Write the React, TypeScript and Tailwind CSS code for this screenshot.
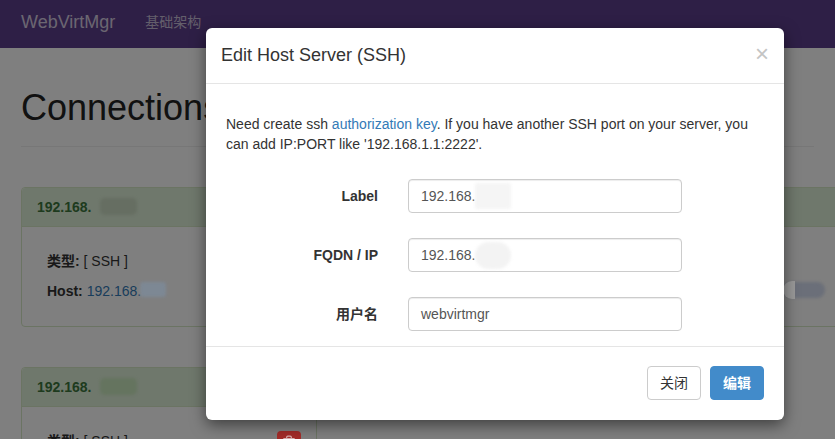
import { Trash2 } from "lucide-react";

const cjk = "font-['Liberation_Sans','Noto_Sans_CJK_SC',sans-serif]";

function Smudge({ className }: { className: string }) {
  return <span aria-hidden className={"absolute z-20 rounded-full blur-[1.5px] " + className} />;
}

function Panel({ narrow, children, smudge }: { narrow?: boolean; children: React.ReactNode; smudge: string }) {
  return (
    <section className={"rounded border border-[#d6e9c6] bg-white " + (narrow ? "w-[296px]" : "w-[840px]")}>
      <div className="relative h-[39px] rounded-t bg-[#dff0d8] border-b border-[#d6e9c6] px-[15px] pt-[9px] text-[14px] leading-[20px] font-bold text-[#3c763d]">
        192.168.
        <Smudge className={"left-[78px] top-[10px] h-[17px] w-[37px] !rounded-[5px] " + smudge} />
      </div>
      {children}
    </section>
  );
}

function Field({ label, value, smudge }: { label: string; value: string; smudge?: string }) {
  return (
    <div className="flex items-center">
      <label className="w-[152px] text-right text-[14px] font-bold text-[#333]">{label}</label>
      <div className="relative ml-[30px] flex h-[34px] w-[274px] items-center rounded border border-[#ccc] px-3 text-[14px] text-[#555] shadow-[inset_0_1px_1px_rgba(0,0,0,0.075)]">
        {value}
        {smudge && <span aria-hidden className={"absolute blur-[1.5px] " + smudge} />}
      </div>
    </div>
  );
}

export default function App() {
  return (
    <div className={"relative h-[439px] w-[835px] overflow-hidden bg-white text-[14px] text-[#333] " + cjk}>
      <nav className="flex h-12 items-center bg-[#5d3f8c] pb-[4px]">
        <span className="ml-[21px] text-[18px] text-[#d6cde2]">WebVirtMgr</span>
        <span className="ml-[30px] text-[14px] text-[#c6bcd6]">基础架构</span>
      </nav>
      <main className="px-[21px]">
        <h1 className="mt-[40px] border-b border-[#eee] pb-[18px] text-[36px] leading-[40px] text-[#222]">Connections</h1>
        <div className="mt-[40px] flex flex-col gap-[40px]">
          <Panel smudge="bg-[#666e62]">
            <div className="relative h-[99px] px-[25px] pt-[24px] leading-[20px]">
              <p><b>类型:</b> [ SSH ]</p>
              <p className="mt-[10px]">
                <b>Host:</b> <span className="text-[#337ab7]">192.168.</span>
              </p>
              <Smudge className="left-[118px] top-[55px] h-[15px] w-[26px] !rounded-[3px] bg-[#7d8894]" />
              <Smudge className="left-[761px] top-[55px] h-[16px] w-[42px] bg-[#6b6f79]" />
              <span aria-hidden className="absolute left-[761px] top-[54px] z-20 h-[18px] w-[12px] rounded-l-full bg-[#999999]" />
            </div>
          </Panel>
          <Panel narrow smudge="bg-[#65745f]">
            <div className="relative h-[60px] px-[25px] pt-[24px] leading-[20px]">
              <p><b>类型:</b> [ SSH ]</p>
              <span className="absolute left-[255px] top-[24px] z-20 flex h-[30px] w-[24px] justify-center rounded bg-[#a32c29] pt-[4px] text-[#d8b0b0]">
                <Trash2 size={14} />
              </span>
            </div>
          </Panel>
        </div>
      </main>

      <div className="absolute inset-0 z-10 bg-black/50" />

      <div
        role="dialog"
        className="absolute left-[206px] top-[28px] z-30 flex h-[392px] w-[578px] flex-col rounded-[6px] bg-white shadow-[0_5px_15px_rgba(0,0,0,0.5)]"
      >
        <header className="flex h-[56px] items-center justify-between border-b border-[#e5e5e5] pl-[15px] pr-[15px]">
          <h4 className="text-[18px] text-[#333]">Edit Host Server (SSH)</h4>
          <span className="-mt-[4px] text-[24px] font-normal leading-none text-[#c4c4c4]">×</span>
        </header>
        <div className="flex-1 px-[20px] pt-[30px]">
          <p className="leading-[20px]">
            Need create ssh <span className="text-[#337ab7]">authorization key</span>. If you have another SSH port on your server, you can add IP:PORT like '192.168.1.1:2222'.
          </p>
          <div className="mt-[25px] flex flex-col gap-[25px]">
            <Field label="Label" value="192.168." smudge="left-[66px] top-[3px] h-[26px] w-[36px] rounded-[2px] bg-[#f5f5f5]" />
            <Field label="FQDN / IP" value="192.168." smudge="left-[66px] top-[3px] h-[27px] w-[36px] rounded-full bg-[#f3f3f3]" />
            <Field label="用户名" value="webvirtmgr" />
          </div>
        </div>
        <footer className="flex h-[74px] items-center justify-end gap-[9px] border-t border-[#e5e5e5] px-[20px] pb-[1px]">
          <button className="h-[34px] w-[54px] rounded border border-[#ccc] bg-white text-[#333]">关闭</button>
          <button className="h-[34px] w-[54px] rounded border border-[#428bca] bg-[#428bca] font-bold text-white">编辑</button>
        </footer>
      </div>
    </div>
  );
}
